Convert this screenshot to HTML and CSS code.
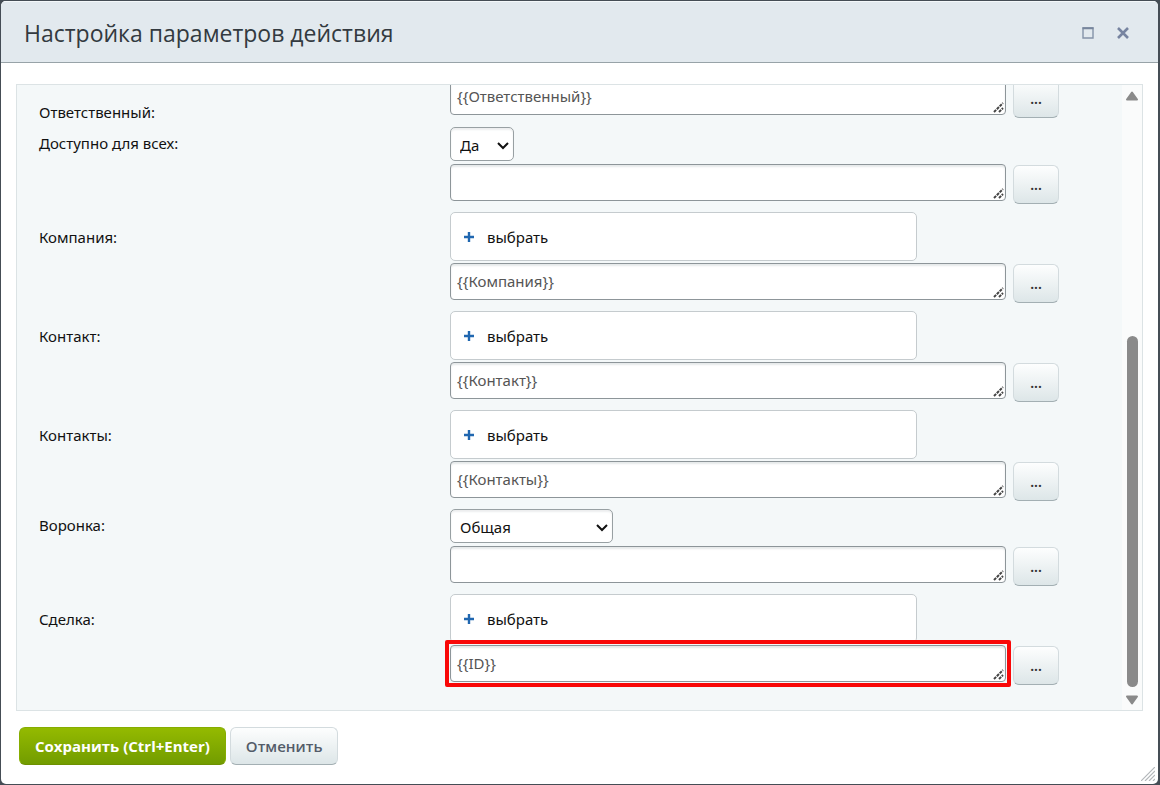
FILE: index.html
```html
<!DOCTYPE html>
<html lang="ru">
<head>
    <meta charset="UTF-8">
    <title>Настройка параметров действия</title>
    <meta name="viewport" content="width=device-width, initial-scale=1.0">
    <link rel="stylesheet" href="styles.css">
</head>
<body>
    <div class="dialog">
        <header class="dialog-head">
            <h1>Настройка параметров действия</h1>
            <button type="button" class="head-btn" aria-label="Развернуть">
                <svg width="12" height="12" viewBox="0 0 12 12"><path d="M1 1h10v10H1z" fill="none" stroke="#8593a8" stroke-width="1.4"/><path d="M0.5 1.3h11" stroke="#77869d" stroke-width="2"/></svg>
            </button>
            <button type="button" class="head-btn" aria-label="Закрыть">
                <svg width="12" height="12" viewBox="0 0 12 12"><path d="M1 1l10 10M11 1L1 11" stroke="#7784a0" stroke-width="2.6"/></svg>
            </button>
        </header>
        <form class="dialog-body">
            <div class="panel">
                <div class="fields">
                    <!-- Ответственный -->
                    <div class="row row-single">
                        <label for="responsible">Ответственный:</label>
                        <div class="field">
                            <div class="line">
                                <textarea id="responsible" rows="1">{{Ответственный}}</textarea>
                                <button type="button" class="btn btn-dots">...</button>
                            </div>
                        </div>
                    </div>
                    <!-- Доступно для всех -->
                    <div class="row row-select">
                        <label for="opened">Доступно для всех:</label>
                        <div class="field">
                            <select id="opened" class="select-short">
                                <option>Да</option>
                                <option>Нет</option>
                            </select>
                            <div class="line">
                                <textarea rows="1" aria-label="Доступно для всех, выражение"></textarea>
                                <button type="button" class="btn btn-dots">...</button>
                            </div>
                        </div>
                    </div>
                    <!-- Компания -->
                    <div class="row">
                        <label for="company">Компания:</label>
                        <div class="field">
                            <div class="picker"><a href="#"><svg width="10" height="10" viewBox="0 0 10 10"><path d="M5 0v10M0 5h10" stroke="#2067b0" stroke-width="2.4"/></svg>выбрать</a></div>
                            <div class="line">
                                <textarea id="company" rows="1">{{Компания}}</textarea>
                                <button type="button" class="btn btn-dots">...</button>
                            </div>
                        </div>
                    </div>
                    <!-- Контакт -->
                    <div class="row">
                        <label for="contact">Контакт:</label>
                        <div class="field">
                            <div class="picker"><a href="#"><svg width="10" height="10" viewBox="0 0 10 10"><path d="M5 0v10M0 5h10" stroke="#2067b0" stroke-width="2.4"/></svg>выбрать</a></div>
                            <div class="line">
                                <textarea id="contact" rows="1">{{Контакт}}</textarea>
                                <button type="button" class="btn btn-dots">...</button>
                            </div>
                        </div>
                    </div>
                    <!-- Контакты -->
                    <div class="row">
                        <label for="contacts">Контакты:</label>
                        <div class="field">
                            <div class="picker"><a href="#"><svg width="10" height="10" viewBox="0 0 10 10"><path d="M5 0v10M0 5h10" stroke="#2067b0" stroke-width="2.4"/></svg>выбрать</a></div>
                            <div class="line">
                                <textarea id="contacts" rows="1">{{Контакты}}</textarea>
                                <button type="button" class="btn btn-dots">...</button>
                            </div>
                        </div>
                    </div>
                    <!-- Воронка -->
                    <div class="row row-select">
                        <label for="category">Воронка:</label>
                        <div class="field">
                            <select id="category" class="select-long">
                                <option>Общая</option>
                            </select>
                            <div class="line">
                                <textarea rows="1" aria-label="Воронка, выражение"></textarea>
                                <button type="button" class="btn btn-dots">...</button>
                            </div>
                        </div>
                    </div>
                    <!-- Сделка -->
                    <div class="row">
                        <label for="deal">Сделка:</label>
                        <div class="field">
                            <div class="picker"><a href="#"><svg width="10" height="10" viewBox="0 0 10 10"><path d="M5 0v10M0 5h10" stroke="#2067b0" stroke-width="2.4"/></svg>выбрать</a></div>
                            <div class="line">
                                <div class="marked">
                                    <textarea id="deal" rows="1">{{ID}}</textarea>
                                </div>
                                <button type="button" class="btn btn-dots">...</button>
                            </div>
                        </div>
                    </div>
                </div>
                <div class="scrollbar">
                    <svg width="14" height="12" viewBox="0 0 14 12"><path d="M7 2.5l5 7H2z" fill="#8a8a8a" stroke="#8a8a8a" stroke-width="2" stroke-linejoin="round"/></svg>
                    <div class="track"><div class="thumb"></div></div>
                    <svg width="14" height="12" viewBox="0 0 14 12"><path d="M7 9.5l5-7H2z" fill="#8a8a8a" stroke="#8a8a8a" stroke-width="2" stroke-linejoin="round"/></svg>
                </div>
            </div>
            <div class="actions">
                <button type="submit" class="btn btn-save">Сохранить (Ctrl+Enter)</button>
                <button type="button" class="btn btn-cancel">Отменить</button>
            </div>
        </form>
        <svg class="grip" width="14" height="14" viewBox="0 0 14 14"><path d="M0 14L14 0M4 14L14 4M8 14l6-6M12 14l2-2" stroke="#b4b8bb" stroke-width="1.2"/></svg>
    </div>
</body>
</html>
```
FILE: styles.css
```css
* {
    box-sizing: border-box;
}
html, body {
    height: 100%;
    margin: 0;
}
body {
    padding: 1px 2px 1px 1px;
    background: #454d55;
    font-family: "Noto Sans", "Open Sans", sans-serif;
    font-size: 15px;
    color: #111;
}
.dialog {
    position: relative;
    display: flex;
    flex-direction: column;
    height: 100%;
    background: #fff;
    border-radius: 5px;
    overflow: hidden;
}
.dialog-head {
    display: flex;
    align-items: center;
    gap: 11px;
    height: 62px;
    flex-shrink: 0;
    padding: 2px 23px 0 23px;
    background: #e2e9ee;
    border-top: 1px solid #f4f8fa;
    border-bottom: 1px solid #98a3a8;
}
.dialog-head h1 {
    flex: 1;
    margin: 0;
    font-family: "Open Sans", "Noto Sans", sans-serif;
    font-size: 23px;
    font-weight: 400;
    color: #333a40;
}
.head-btn {
    display: flex;
    align-items: center;
    justify-content: center;
    width: 24px;
    height: 24px;
    padding: 0;
    border: none;
    background: none;
    cursor: pointer;
}
.dialog-body {
    flex: 1;
    min-height: 0;
    display: flex;
    flex-direction: column;
    padding: 21px 15px 19px;
}
.panel {
    flex: 1;
    min-height: 0;
    display: flex;
    background: #f4f8f9;
    border: 1px solid #dce3e5;
    overflow: hidden;
}
/* the list is scrolled to its end */
.fields {
    flex: 1;
    display: flex;
    flex-direction: column;
    justify-content: flex-end;
    gap: 8px;
    padding: 0 63px 25px 22px;
}
.row {
    display: flex;
    flex-shrink: 0;
}
.row label {
    width: 411px;
    flex-shrink: 0;
    line-height: 50px;
    align-self: flex-start;
}
.row-select label {
    line-height: 32px;
}
.row-single {
    margin-bottom: 1px;
}
.row-single label {
    align-self: flex-end;
    line-height: 12px;
}
.field {
    flex: 1;
    display: flex;
    flex-direction: column;
    align-items: flex-start;
    gap: 2px;
}
.row-select .field {
    gap: 3px;
}
.line {
    display: flex;
    align-items: flex-start;
    gap: 7px;
    width: 100%;
}
textarea {
    display: block;
    flex: 1;
    width: 100%;
    height: 37px;
    margin: 0;
    padding: 5px 6px;
    border: 1px solid #8d9599;
    border-radius: 4px;
    background: #fff;
    box-shadow: inset 0 2px 2px #e6e9ea;
    font-family: "Noto Sans", "Open Sans", sans-serif;
    font-size: 15px;
    line-height: 24px;
    color: #555;
    overflow: hidden;
    resize: both;
}
textarea::-webkit-resizer {
    background: url("data:image/svg+xml,%3Csvg xmlns='http://www.w3.org/2000/svg' width='15' height='15'%3E%3Cpath d='M4 13L13 4M9 13L13 9' stroke='%23444' stroke-width='2' stroke-dasharray='3 1'/%3E%3C/svg%3E") no-repeat right bottom;
}
select {
    height: 34px;
    padding: 5px 9px 3px;
    border: 1px solid #98a0a3;
    border-radius: 5px;
    background: #fff url("data:image/svg+xml,%3Csvg xmlns='http://www.w3.org/2000/svg' width='12' height='8'%3E%3Cpath d='M1 1l5 5 5-5' fill='none' stroke='%23111' stroke-width='2'/%3E%3C/svg%3E") no-repeat right 4px top 14px;
    box-shadow: inset 0 2px 2px #eceeef;
    font: inherit;
    color: #111;
    appearance: none;
}
.select-short {
    width: 64px;
}
.select-long {
    width: 163px;
}
.picker {
    display: flex;
    align-items: center;
    width: 467px;
    max-width: 100%;
    height: 49px;
    padding: 0 13px;
    border: 1px solid #c5cbce;
    border-radius: 5px;
    background: #fff;
}
.picker a {
    display: flex;
    align-items: center;
    gap: 13px;
    color: #111;
    text-decoration: none;
}
.marked {
    position: relative;
    flex: 1;
}
.marked::after {
    content: "";
    position: absolute;
    inset: -5px;
    border: 4px solid #f90808;
    border-radius: 2px;
    pointer-events: none;
}
.btn {
    border: 1px solid #d3dbde;
    border-bottom-color: #a3afb3;
    border-radius: 6px;
    background: linear-gradient(#fdfefe, #dde6e8);
    font: inherit;
    color: #333;
    cursor: pointer;
}
.btn-dots {
    width: 46px;
    height: 39px;
    margin-top: 1px;
    padding: 0;
    font-size: 14px;
    font-weight: 600;
}
.scrollbar {
    display: flex;
    flex-direction: column;
    align-items: center;
    width: 20px;
    padding: 5px 0 4px;
    background: #fafbfb;
}
.track {
    flex: 1;
    display: flex;
    flex-direction: column;
    justify-content: flex-end;
    padding-bottom: 7px;
}
.thumb {
    width: 11px;
    height: 60%;
    border-radius: 6px;
    background: #8a8a8a;
}
.actions {
    display: flex;
    gap: 4px;
    padding: 16px 0 0 3px;
}
.btn-save, .btn-cancel {
    height: 38px;
    padding: 0 15px;
    font-family: "Open Sans", "Noto Sans", sans-serif;
    font-weight: 600;
    color: #535c69;
}
.btn-save {
    border-color: #86ad00;
    border-bottom-color: #6d9000;
    background: linear-gradient(#94ba00, #729c00);
    font-weight: 700;
    color: #fff;
}
.grip {
    position: absolute;
    right: 3px;
    bottom: 3px;
}
```
